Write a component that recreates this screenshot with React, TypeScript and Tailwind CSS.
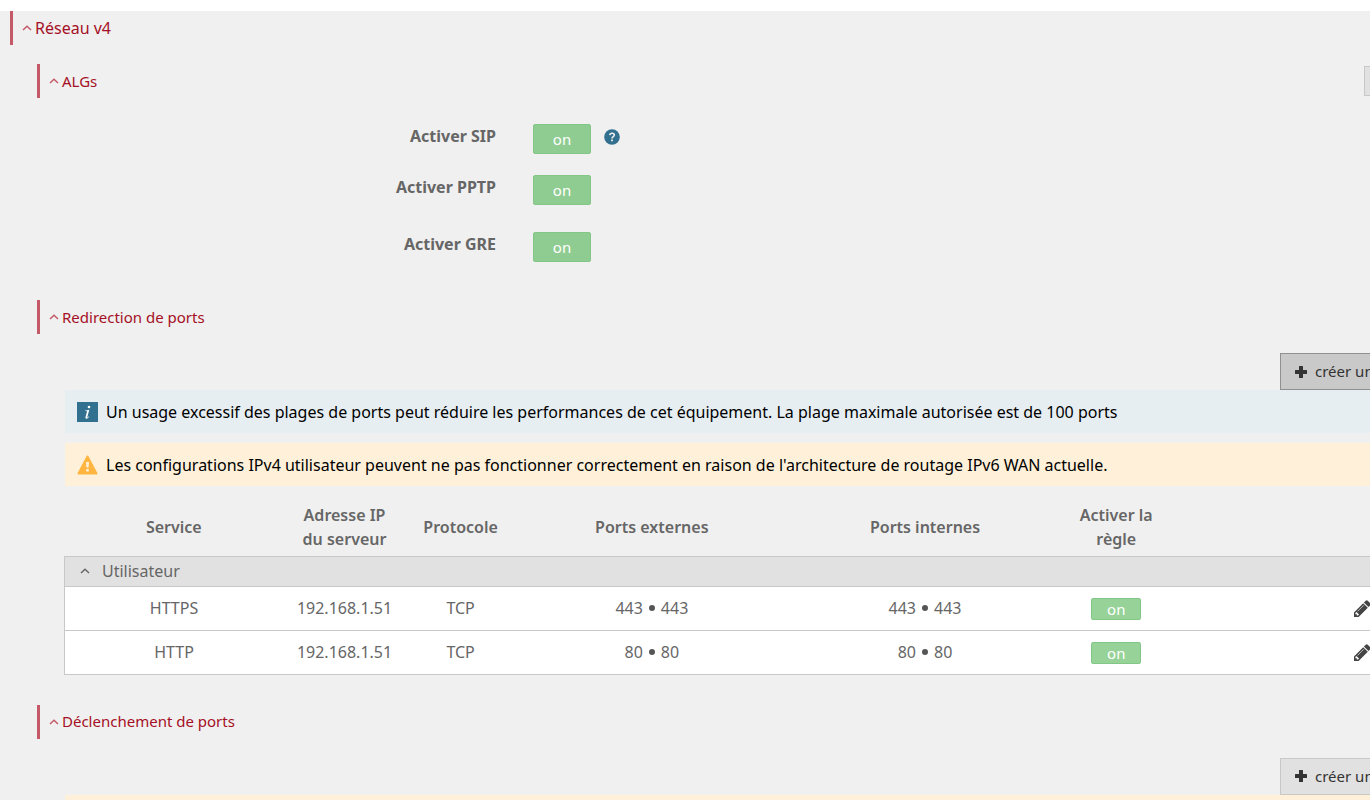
import { ReactNode, useState } from "react";
import clsx from "clsx";

interface Rule {
  id: number;
  service: string;
  ip: string;
  protocol: string;
  port: string;
}

const rules: Rule[] = [
  { id: 1, service: "HTTPS", ip: "192.168.1.51", protocol: "TCP", port: "443" },
  { id: 2, service: "HTTP", ip: "192.168.1.51", protocol: "TCP", port: "80" },
];

const Caret = ({ className }: { className?: string }) => (
  <svg viewBox="0 0 10 6" className={clsx("shrink-0", className)} fill="none">
    <path d="M1 5 L5 1.3 L9 5" stroke="currentColor" strokeWidth="1.5" />
  </svg>
);

const PlusIcon = () => (
  <svg viewBox="0 0 12 12" className="w-3 h-3 shrink-0" fill="currentColor">
    <path d="M5 0h2.4q.6 0 .6.6V4h3.4q.6 0 .6.6v2.8q0 .6-.6.6H8v3.4q0 .6-.6.6H4.6q-.6 0-.6-.6V8H.6Q0 8 0 7.400V4.600Q0 4 .6 4H4V.6Q4 0 4.600 0z" />
  </svg>
);

const PencilIcon = () => (
  <svg viewBox="0 0 1536 1536" className="w-[17px] h-[17px]" fill="currentColor">
    <path d="M363 1408l91-91-235-235-91 91v107h128v128h107zM886 480q0-22-22-22-10 0-17 7l-542 542q-7 7-7 17 0 22 22 22 10 0 17-7l542-542q7-7 7-17zM832 288l416 416-832 832H0v-416zM1515 384q0 53-37 90l-166 166-416-416 166-165q36-38 90-38 53 0 91 38l235 234q37 39 37 91z" />
  </svg>
);

const InfoIcon = () => (
  <span className="w-[21px] h-5 shrink-0 bg-[#31708f] text-white flex items-center justify-center">
    <svg viewBox="0 0 21 20" className="w-[21px] h-5" fill="currentColor">
      <circle cx="12" cy="5" r="1.300" />
      <path d="M8.300 8.500q2-.3 4-.8l-1.900 7q-.2.900.3.700.6-.2 1.200-1.100l.4.3q-1.400 2.200-3 2.200-1.300 0-.8-1.800l1.400-5.100q.2-.8-.5-.8l-1.100-.1z" />
    </svg>
  </span>
);

const WarningIcon = () => (
  <svg viewBox="0 0 21 20" className="w-[21px] h-5 shrink-0">
    <path
      d="M10.500 1.500 19.500 18.500h-18z"
      fill="#ffb540"
      stroke="#ffb540"
      strokeWidth="2"
      strokeLinejoin="round"
    />
    <path d="M9 7h3l-.4 5.500H9.400zM9.200 14h2.600v2.500H9.200z" fill="#fff1d9" />
  </svg>
);

const HelpIcon = () => (
  <svg viewBox="0 0 16 16" className="w-4 h-4">
    <circle cx="8" cy="8" r="7.800" fill="#31708f" />
    <path
      d="M5.800 6.100Q6 4.200 8.100 4.200q2.200 0 2.200 1.800 0 1-1.100 1.700Q8 8.400 8 9.500"
      fill="none"
      stroke="#f0f0f0"
      strokeWidth="1.600"
    />
    <path d="M7.100 10.500h1.800v1.700H7.100z" fill="#f0f0f0" />
  </svg>
);

const SectionTitle = ({ title, main }: { title: string; main?: boolean }) => (
  <button
    type="button"
    className={clsx(
      "h-[34px] flex items-center gap-[3px] border-l-3 border-[#c45a68] pl-[9px] text-[#a50f25]",
      main ? "pb-px text-base" : "text-[15px]"
    )}
  >
    <Caret className="w-[10px] h-[6px] text-[#c45a68]" />
    {title}
  </button>
);

const Toggle = ({ label, small }: { label: string; small?: boolean }) => {
  const [on, setOn] = useState(true);

  return (
    <button
      type="button"
      aria-label={label}
      aria-pressed={on}
      onClick={() => setOn(!on)}
      className={clsx(
        "rounded-xs border border-[#83c786] text-white text-[15px]",
        small
          ? "w-[50px] h-[22px] leading-5 bg-[#97d398]"
          : "w-[58px] h-[30px] leading-7 bg-[#8fcc91]"
      )}
    >
      {on ? "on" : "off"}
    </button>
  );
};

const AlgRow = ({ label, help }: { label: string; help?: boolean }) => (
  <div className="flex items-start">
    <span className="w-[459px] text-right font-bold leading-6">{label}</span>
    <span className="ml-[37px] flex">
      <Toggle label={label} />
    </span>
    {help && (
      <button type="button" aria-label="Aide" className="ml-[13px] mt-[5px]">
        <HelpIcon />
      </button>
    )}
  </div>
);

const CreateButton = ({ active }: { active?: boolean }) => (
  <div className="flex justify-end">
    <button
      type="button"
      className={clsx(
        "w-[151px] h-[37px] flex items-center gap-2 border pl-[14px] text-[15px] text-[#333]",
        active ? "bg-[#c9c9c9] border-[#909090]" : "bg-[#e1e1e1] border-[#c8c8c8]"
      )}
    >
      <PlusIcon />
      créer un
    </button>
  </div>
);

const Notice = ({ info, children }: { info?: boolean; children?: ReactNode }) => (
  <div
    className={clsx(
      "ml-px h-[43px] flex items-center gap-2 pl-3 text-black",
      info ? "bg-[#e6eef2]" : "bg-[#fff1d9]"
    )}
  >
    {info ? <InfoIcon /> : <WarningIcon />}
    <span>{children}</span>
  </div>
);

const Ports = ({ port }: { port: string }) => (
  <span className="inline-flex items-center gap-[6px]">
    {port}
    <span className="w-[6px] h-[6px] rounded-full bg-[#555]" />
    {port}
  </span>
);

const RulesTable = () => (
  <table className="w-full table-fixed border-collapse text-center">
    <colgroup>
      <col className="w-[16%]" />
      <col className="w-[9%]" />
      <col className="w-[8%]" />
      <col className="w-[20%]" />
      <col className="w-[20%]" />
      <col className="w-[8%]" />
      <col />
    </colgroup>
    <thead>
      <tr className="h-[53px] leading-6">
        <th className="pb-1 font-semibold">Service</th>
        <th className="pb-1 font-semibold px-4">Adresse IP du serveur</th>
        <th className="pb-1 font-semibold">Protocole</th>
        <th className="pb-1 font-semibold">Ports externes</th>
        <th className="pb-1 font-semibold">Ports internes</th>
        <th className="pb-1 font-semibold px-3">Activer la règle</th>
        <th />
      </tr>
    </thead>
    <tbody className="border border-[#c8c8c8]">
      <tr className="h-[30px] bg-[#e1e1e1]">
        <td colSpan={7} className="pl-[15px] text-left">
          <button type="button" className="flex items-center gap-3 leading-6">
            <Caret className="w-[10px] h-[6px]" />
            Utilisateur
          </button>
        </td>
      </tr>
      {rules.map(({ id, service, ip, protocol, port }) => (
        <tr key={id} className="h-11 bg-white border-t border-[#c8c8c8]">
          <td>{service}</td>
          <td>{ip}</td>
          <td>{protocol}</td>
          <td>
            <Ports port={port} />
          </td>
          <td>
            <Ports port={port} />
          </td>
          <td className="pt-px">
            <span className="flex justify-center">
              <Toggle label={`Activer la règle ${service}`} small />
            </span>
          </td>
          <td className="pr-[59px]">
            <span className="flex justify-end text-[#444]">
              <button type="button" aria-label={`Modifier ${service}`}>
                <PencilIcon />
              </button>
            </span>
          </td>
        </tr>
      ))}
    </tbody>
  </table>
);

export default function App() {
  return (
    <div className="h-screen overflow-hidden pt-[11px] bg-white font-['Noto_Sans',sans-serif] text-base text-[#666]">
      <main className="min-h-full bg-[#f0f0f0] pl-[10px] -mr-[61px]">
        <SectionTitle title="Réseau v4" main />

        <section className="pl-[27px] mt-[19px]">
          <div className="flex items-center justify-between">
            <SectionTitle title="ALGs" />
            <button
              type="button"
              aria-label="Actions ALG"
              className="w-[67px] h-[30px] bg-[#e1e1e1] border border-[#c8c8c8]"
            />
          </div>
          <div className="pt-[26px] flex flex-col">
            <AlgRow label="Activer SIP" help />
            <div className="mt-[21px]">
              <AlgRow label="Activer PPTP" />
            </div>
            <div className="mt-[27px]">
              <AlgRow label="Activer GRE" />
            </div>
          </div>
        </section>

        <section className="pl-[27px] mt-[38px]">
          <SectionTitle title="Redirection de ports" />
          <div className="pl-[27px] pt-[19px]">
            <CreateButton active />
            <Notice info>
              Un usage excessif des plages de ports peut réduire les performances de cet
              équipement. La plage maximale autorisée est de 100 ports
            </Notice>
            <div className="mt-[10px] mb-[17px]">
              <Notice>
                Les configurations IPv4 utilisateur peuvent ne pas fonctionner correctement
                en raison de l'architecture de routage IPv6 WAN actuelle.
              </Notice>
            </div>
            <RulesTable />
          </div>
        </section>

        <section className="pl-[27px] mt-[30px]">
          <SectionTitle title="Déclenchement de ports" />
          <div className="pl-[27px] pt-[19px]">
            <CreateButton />
            <Notice />
          </div>
        </section>
      </main>
    </div>
  );
}
